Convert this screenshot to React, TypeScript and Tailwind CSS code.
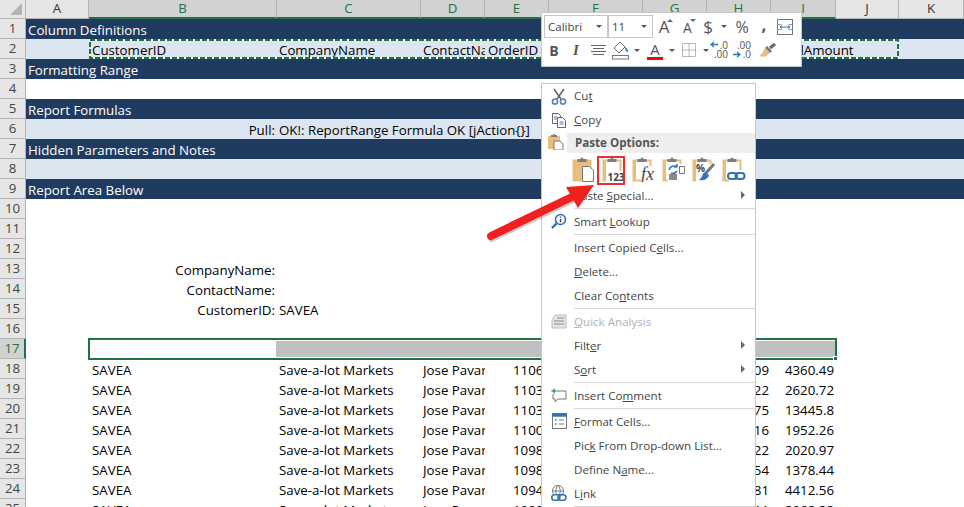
import React from 'react'

const colWidths = ['w-[63px]', 'w-[188px]', 'w-[144px]', 'w-[64px]', 'w-[64px]', 'w-[94px]', 'w-[64px]', 'w-[64px]', 'w-[65px]', 'w-[63px]', 'w-[65px]']
const colNames = ['A', 'B', 'C', 'D', 'E', 'F', 'G', 'H', 'I', 'J', 'K']

type Cell = { text: string; right?: boolean; clip?: boolean; tone?: string }
type RowData = { n: number; tone?: string; cells?: Record<number, Cell> }

const dark = 'bg-[#203b60] text-white'
const light = 'bg-[#dce6f1] text-black'

const records = [
  ['11064', '09', '4360.49'],
  ['11031', '22', '2620.72'],
  ['11030', '75', '13445.8'],
  ['11008', '16', '1952.26'],
  ['10984', '22', '2020.97'],
  ['10983', '54', '1378.44'],
  ['10941', '81', '4412.56'],
  ['10904', '11', '2062.22'],
]

const rows: RowData[] = [
  { n: 1, tone: dark, cells: { 0: { text: 'Column Definitions' } } },
  {
    n: 2,
    tone: light,
    cells: {
      1: { text: 'CustomerID' },
      2: { text: 'CompanyName' },
      3: { text: 'ContactName', clip: true },
      4: { text: 'OrderID' },
      8: { text: 'TotalAmount' },
    },
  },
  { n: 3, tone: dark, cells: { 0: { text: 'Formatting Range' } } },
  { n: 4 },
  { n: 5, tone: dark, cells: { 0: { text: 'Report Formulas' } } },
  {
    n: 6,
    tone: light,
    cells: { 1: { text: 'Pull:', right: true }, 2: { text: 'OK!: ReportRange Formula OK [jAction{}]' } },
  },
  { n: 7, tone: dark, cells: { 0: { text: 'Hidden Parameters and Notes' } } },
  { n: 8, tone: light },
  { n: 9, tone: dark, cells: { 0: { text: 'Report Area Below' } } },
  { n: 10 },
  { n: 11 },
  { n: 12 },
  { n: 13, cells: { 1: { text: 'CompanyName:', right: true } } },
  { n: 14, cells: { 1: { text: 'ContactName:', right: true } } },
  { n: 15, cells: { 1: { text: 'CustomerID:', right: true }, 2: { text: 'SAVEA' } } },
  { n: 16 },
  { n: 17 },
  ...records.map((r, i) => ({
    n: 18 + i,
    cells: {
      1: { text: 'SAVEA' },
      2: { text: 'Save-a-lot Markets' },
      3: { text: 'Jose Pavarotti', clip: true },
      4: { text: r[0], right: true },
      7: { text: r[1], right: true },
      8: { text: r[2], right: true },
    },
  })),
]

function Row({ row }: { row: RowData }) {
  const selected = row.n === 17
  return (
    <div className={`flex h-[20px] ${row.tone ?? 'bg-white text-black'}`}>
      <div
        className={`w-[26px] h-[20px] shrink-0 flex items-center justify-center pt-px text-[13.3px] border-b border-[#b4b4b4] ${
          selected
            ? 'bg-[#d2d2d2] text-[#217346] border-r-2 border-r-[#217346]'
            : 'bg-[#e6e6e6] text-[#444] border-r border-r-[#b4b4b4]'
        }`}
      >
        {row.n}
      </div>
      {colWidths.map((w, i) => {
        const cell = row.cells?.[i]
        const side = cell?.right
          ? i === 4
            ? '-right-[2px]'
            : 'right-[2px]'
          : i === 1 || i === 4
            ? 'left-[3px]'
            : 'left-[2px]'
        return (
          <div key={i} className={`${w} h-[20px] shrink-0 relative`}>
            {cell && (
              <span
                className={`absolute top-px leading-[21px] whitespace-nowrap text-[13.3px] ${side} ${
                  cell.clip ? 'w-[62px] overflow-hidden' : ''
                }`}
              >
                {cell.text}
              </span>
            )}
          </div>
        )
      })}
    </div>
  )
}

function ColumnHeader() {
  return (
    <div className="flex h-[19px]">
      <div className="w-[26px] h-[19px] shrink-0 bg-[#e6e6e6] border-r border-b border-[#b4b4b4] flex items-end justify-end pr-[3px] pb-[3px]">
        <div className="w-[12px] h-[12px] bg-[#b4b4b4] [clip-path:polygon(100%_0,100%_100%,0_100%)]" />
      </div>
      {colWidths.map((w, i) => {
        const on = i >= 1 && i <= 8
        return (
          <div
            key={i}
            className={`${w} h-[19px] shrink-0 flex items-center justify-center text-[13.3px] border-r border-[#b4b4b4] ${
              on
                ? 'bg-[#d2d2d2] text-[#217346] border-b-2 border-b-[#217346]'
                : 'bg-[#e6e6e6] text-[#333] border-b border-b-[#b4b4b4]'
            }`}
          >
            {colNames[i]}
          </div>
        )
      })}
    </div>
  )
}

const tan = '#e8bd80'
const clip = '#7d7d7d'

function Board({ solid, children }: { solid?: boolean; children?: React.ReactNode }) {
  return (
    <svg width="24" height="26" viewBox="0 0 24 26">
      <path d="M1.5 4.5h17v20h-17z" fill={solid ? tan : '#fff'} stroke={tan} strokeWidth="2" />
      {!solid && <path d="M1 4h3v21H1z" fill={tan} />}
      <path d="M5.5 6V3h3a1.5 1.5 0 0 1 3 0h3v3z" fill={clip} />
      {children}
    </svg>
  )
}

function PasteIcons() {
  return (
    <div className="flex h-[30px] gap-[6px] pl-[30px] pt-[3px]">
      <Board solid>
        <path d="M10.5 10.5h7l4 4v11h-11z" fill="#fff" stroke="#777" />
      </Board>
      <Board>
        <rect x="4" y="15" width="20" height="11" fill="#fff" />
        <text x="14" y="24.5" textAnchor="middle" fontSize="10" fontWeight="700" fill="#444">123</text>
      </Board>
      <Board>
        <rect x="9" y="10" width="15" height="16" fill="#fff" />
        <text x="15.5" y="24" textAnchor="middle" fontSize="18" fontStyle="italic" fontFamily="'Liberation Serif', serif" fill="#444">fx</text>
      </Board>
      <Board>
        <rect x="6" y="8" width="18" height="18" fill="#fff" />
        <path d="M17.5 10.5h5v7h-5z" fill="#fff" stroke="#777" />
        <path d="M7 18h8v6H7z" fill="#8a8a8a" />
        <path d="M7 14a5 5 0 0 1 8-3m0 0V8m0 3h-3M15 15a5 5 0 0 1-6 2" fill="none" stroke="#2f75b5" strokeWidth="1.5" />
      </Board>
      <Board>
        <rect x="4" y="8" width="16" height="18" fill="#fff" />
        <text x="4" y="16" fontSize="10" fontWeight="700" fill="#444">%</text>
        <path d="M22 8 14 17" stroke="#777" strokeWidth="3" />
        <path d="M13 16c-3 1-2 5-6 8 5 1 9-1 10-5z" fill="#2f75b5" />
      </Board>
      <Board>
        <rect x="7" y="14" width="17" height="12" fill="#fff" />
        <rect x="6" y="17" width="9" height="6" rx="3" fill="none" stroke="#2f75b5" strokeWidth="2" />
        <rect x="13.5" y="17" width="9" height="6" rx="3" fill="none" stroke="#2f75b5" strokeWidth="2" />
      </Board>
    </div>
  )
}

const Scissors = (
  <svg width="16" height="17" viewBox="0 0 16 17" fill="none">
    <path d="M3 1l7 10M13 1 6 11" stroke="#666" strokeWidth="1.6" />
    <circle cx="4" cy="13.5" r="2.6" stroke="#4f7cb5" strokeWidth="1.5" />
    <circle cx="12" cy="13.5" r="2.6" stroke="#4f7cb5" strokeWidth="1.5" />
  </svg>
)

const CopyIcon = (
  <svg width="16" height="15" viewBox="0 0 16 15" fill="none" stroke="#666">
    <path d="M1.5.5h6l2 2v8h-8z" fill="#fff" />
    <path d="M6.5 4.5h5l3 3v7h-8z" fill="#fff" />
    <path d="M3 4h3M3 6h3M8.5 9h4M8.5 11h4" stroke="#4f7cb5" />
  </svg>
)

const LookupIcon = (
  <svg width="16" height="16" viewBox="0 0 16 16" fill="none">
    <circle cx="9.5" cy="6.5" r="5" stroke="#2f6db5" strokeWidth="1.6" />
    <path d="M5.5 10.5 1 15" stroke="#2f6db5" strokeWidth="2.4" />
    <path d="M9.5 3.6v1.2M9.5 6v3.2" stroke="#444" strokeWidth="1.5" />
  </svg>
)

const QuickIcon = (
  <svg width="16" height="15" viewBox="0 0 16 15" fill="none">
    <path d="M4 1h11v13H1V6z" fill="#e4e4e4" stroke="#bdbdbd" />
    <path d="M6 4h7M3 7h10M3 10h10" stroke="#a8a8a8" strokeWidth="1.5" />
  </svg>
)

const CommentIcon = (
  <svg width="16" height="15" viewBox="0 0 16 15" fill="none">
    <path d="M6 3h9v8H7l-3 3v-3H2V6" stroke="#777" />
    <path d="M3 .5v5M.5 3h5" stroke="#3f9b6a" strokeWidth="1.5" />
  </svg>
)

const FormatIcon = (
  <svg width="15" height="16" viewBox="0 0 15 16" fill="none">
    <rect x=".5" y="3" width="14" height="12.5" fill="#fff" stroke="#777" />
    <rect x="0" y="0" width="15" height="3.5" fill="#2f75b5" />
    <path d="M3 7h1.5M3 11h1.5" stroke="#666" strokeWidth="1.5" />
    <path d="M7 7h5M7 11h5" stroke="#777" />
  </svg>
)

const LinkIcon = (
  <svg width="16" height="16" viewBox="0 0 16 16" fill="none">
    <circle cx="7" cy="6" r="5.5" stroke="#777" />
    <path d="M1.5 6h11M7 .5c-3 3-3 8 0 11M7 .5c3 3 3 8 0 11" stroke="#777" />
    <rect x=".8" y="9.8" width="8" height="5.4" rx="2.7" fill="#fff" stroke="#2f75b5" strokeWidth="1.6" />
    <rect x="7" y="9.8" width="8" height="5.4" rx="2.7" fill="none" stroke="#2f75b5" strokeWidth="1.6" />
  </svg>
)

const PasteSmall = (
  <svg width="16" height="16" viewBox="0 0 16 16">
    <rect x="0" y="2" width="12" height="13" fill={tan} />
    <path d="M3 3V1h2a1 1 0 0 1 2 0h2v2z" fill={clip} />
    <path d="M6 7h6l3 3v6H6z" fill="#fff" stroke="#777" />
  </svg>
)

function Item({
  icon,
  arrow,
  disabled,
  tight,
  before,
  key_,
  after,
}: {
  icon?: React.ReactNode
  arrow?: boolean
  disabled?: boolean
  tight?: boolean
  before: string
  key_: string
  after: string
}) {
  return (
    <div className={`flex h-[24px] items-center ${disabled ? 'text-[#b1b1b1]' : 'text-[#444]'}`}>
      <div className="w-[32px] flex justify-center pl-[2px] shrink-0">{icon}</div>
      <span className={`whitespace-pre ${tight ? '' : 'mt-[2px]'}`}>
        {before}
        <span className="underline">{key_}</span>
        {after}
      </span>
      {arrow && <div className="ml-auto mr-[10px] w-0 h-0 border-y-[4px] border-y-transparent border-l-[4px] border-l-[#666]" />}
    </div>
  )
}

const Sep = () => <div className="h-[2px] ml-[32px] flex items-center"><div className="h-px w-full bg-[#d8d8d8]" /></div>

function ContextMenu() {
  return (
    <div className="absolute left-[541px] top-[83px] w-[215px] h-[430px] bg-white border border-[#c6c6c6] text-[11.6px]">
      <Item icon={Scissors} tight before="Cu" key_="t" after="" />
      <Item icon={CopyIcon} tight before="" key_="C" after="opy" />
      <div className="flex h-[21px] pt-px">
        <div className="w-[24px] flex justify-center pl-[4px] pt-[1px] shrink-0">{PasteSmall}</div>
        <div className="w-[188px] ml-px bg-[#eeeeee] flex items-center pl-[8px] font-bold text-[#555]">Paste Options:</div>
      </div>
      <PasteIcons />
      <Item before="Paste " key_="S" after="pecial..." arrow />
      <Sep />
      <Item icon={LookupIcon} before="Smart " key_="L" after="ookup" />
      <Sep />
      <Item before="Insert Copied C" key_="e" after="lls..." />
      <Item before="" key_="D" after="elete..." />
      <Item before="Clear Co" key_="n" after="tents" />
      <Sep />
      <Item icon={QuickIcon} disabled before="" key_="Q" after="uick Analysis" />
      <Item before="Filt" key_="e" after="r" arrow />
      <Item before="S" key_="o" after="rt" arrow />
      <Sep />
      <Item icon={CommentIcon} before="Insert Co" key_="m" after="ment" />
      <Sep />
      <Item icon={FormatIcon} before="" key_="F" after="ormat Cells..." />
      <Item before="Pic" key_="k" after=" From Drop-down List..." />
      <Item before="Define N" key_="a" after="me..." />
      <Item icon={LinkIcon} before="L" key_="i" after="nk" />
      <Sep />
    </div>
  )
}

const Caret = () => <div className="w-0 h-0 border-x-[3px] border-x-transparent border-t-[3px] border-t-[#555]" />

function Slot({ w, children }: { w: string; children?: React.ReactNode }) {
  return <div className={`${w} h-full shrink-0 flex items-center justify-center text-[#555]`}>{children}</div>
}

function MiniToolbar() {
  return (
    <div className="absolute left-[541px] top-[12px] w-[261px] h-[55px] bg-white border border-[#c6c6c6] pl-[2px] pt-[2px] text-[#444]">
      <div className="flex h-[23px]">
        <div className="w-[64px] h-[23px] border border-[#c6c6c6] flex items-center justify-between pl-[3px] pr-[5px] text-[11.5px]">
          Calibri <Caret />
        </div>
        <div className="w-[45px] h-[23px] border border-[#c6c6c6] flex items-center justify-between pl-[3px] pr-[5px] text-[11.5px]">
          11 <Caret />
        </div>
        <Slot w="w-[22px]">
          <span className="relative text-[17px] leading-none">A<span className="absolute -right-[4px] top-[1px] w-0 h-0 border-x-[3px] border-x-transparent border-b-[3px] border-b-[#2f75b5]" /></span>
        </Slot>
        <Slot w="w-[25px]">
          <span className="relative text-[14px] leading-none mt-[2px]">A<span className="absolute -right-[4px] -top-[2px] w-0 h-0 border-x-[3px] border-x-transparent border-t-[3px] border-t-[#2f75b5]" /></span>
        </Slot>
        <Slot w="w-[16px]"><span className="text-[17px]">$</span></Slot>
        <Slot w="w-[16px]"><Caret /></Slot>
        <Slot w="w-[20px]"><span className="text-[16px]">%</span></Slot>
        <Slot w="w-[24px]"><span className="text-[17px] font-bold leading-none -mt-[5px]">,</span></Slot>
        <Slot w="w-[18px]">
          <svg width="16" height="16" viewBox="0 0 16 16" fill="none">
            <rect x=".5" y=".5" width="15" height="15" stroke="#777" />
            <path d="M.5 5.5h4M11.5 5.5h4M.5 10.5h4M11.5 10.5h4" stroke="#999" />
            <path d="M3 8h10M3 8l2-1.5M3 8l2 1.5M13 8l-2-1.5M13 8l-2 1.5" stroke="#2f75b5" />
          </svg>
        </Slot>
      </div>
      <div className="flex h-[24px] pl-px">
        <Slot w="w-[18px]"><span className="font-bold text-[14px]">B</span></Slot>
        <Slot w="w-[26px]"><span className="italic font-semibold text-[15px] font-['Liberation_Serif']">I</span></Slot>
        <Slot w="w-[18px]">
          <svg width="15" height="11" viewBox="0 0 15 11" stroke="#666"><path d="M0 .5h15M2 3.5h11M0 6.5h15M2 9.5h11" /></svg>
        </Slot>
        <Slot w="w-[26px]">
          <svg width="17" height="19" viewBox="0 0 17 19" fill="none">
            <path d="M8 1 2 7l5 5 6-6z" stroke="#666" fill="#fff" />
            <path d="M13 6c2 1 3 3 3 5-2 0-3-2-3-5z" fill="#2f75b5" />
            <rect x=".5" y="14.5" width="16" height="3.5" stroke="#777" />
          </svg>
        </Slot>
        <Slot w="w-[8px]"><Caret /></Slot>
        <Slot w="w-[28px]">
          <span className="relative block h-[20px] w-[17px] text-center text-[15px] leading-[18px]">
            A
            <span className="absolute left-0 bottom-0 w-[16px] h-[3px] bg-[#ff0000]" />
          </span>
        </Slot>
        <Slot w="w-[6px]"><Caret /></Slot>
        <Slot w="w-[28px]">
          <svg width="14" height="14" viewBox="0 0 14 14" fill="none" stroke="#777" strokeDasharray="1 1">
            <path d="M.5.5h13v13H.5zM7 .5v13M.5 7h13" />
          </svg>
        </Slot>
        <Slot w="w-[6px]"><Caret /></Slot>
        <Slot w="w-[20px]">
          <span className="relative w-[18px] h-[18px] text-[10px] leading-[9px] text-right block text-[#555]">
            .0<br />.00
            <svg className="absolute left-0 top-0" width="8" height="7" viewBox="0 0 8 7" fill="none" stroke="#2f75b5" strokeWidth="1.3">
              <path d="M8 3.5H1M4 1 1 3.5 4 6" />
            </svg>
          </span>
        </Slot>
        <Slot w="w-[26px]">
          <span className="relative w-[18px] h-[18px] text-[10px] leading-[9px] text-right block text-[#555]">
            .00<br />.0
            <svg className="absolute left-0 top-[10px]" width="8" height="7" viewBox="0 0 8 7" fill="none" stroke="#2f75b5" strokeWidth="1.3">
              <path d="M0 3.5h7M4 1l3 2.5L4 6" />
            </svg>
          </span>
        </Slot>
        <Slot w="w-[24px]">
          <svg width="17" height="15" viewBox="0 0 17 15">
            <path d="M11 5l5-4" stroke="#666" strokeWidth="3" />
            <path d="M8 3l5 5-2 2-5-5z" fill="#777" />
            <path d="M6 5l5 5c-3 2-4 3-6 4l-5-1c3-1 4-5 6-8z" fill="#e8bd80" />
          </svg>
        </Slot>
      </div>
    </div>
  )
}

export default function App() {
  return (
    <div className="relative w-[964px] h-[507px] overflow-hidden bg-white font-['Open_Sans',sans-serif]">
      <ColumnHeader />
      {rows.map((row) => (
        <Row key={row.n} row={row} />
      ))}

      {/* marching ants on row 2 */}
      <svg className="absolute left-[88px] top-[38px]" width="812" height="22" viewBox="0 0 812 22" fill="none">
        <rect x="2" y="2" width="808" height="18" stroke="#fff" strokeWidth="2" />
        <rect x="2" y="2" width="808" height="18" stroke="#1f7246" strokeWidth="2" strokeDasharray="5 2" />
      </svg>

      {/* selection on row 17 */}
      <div className="absolute left-[88px] top-[338px] w-[749px] h-[22px] border-2 border-[#217346] pl-[186px] py-px">
        <div className="w-full h-full bg-[#c0c0c0]" />
        <div className="absolute -right-[3px] -bottom-[3px] w-[5px] h-[5px] bg-[#217346] border border-white" />
      </div>

      <MiniToolbar />
      <ContextMenu />

      {/* red box and arrow */}
      <div className="absolute left-[597px] top-[156px] w-[28px] h-[29px] border-2 border-[#e8302f]" />
      <svg className="absolute left-[480px] top-[180px]" width="120" height="66" viewBox="0 0 120 66">
        <path d="M11 57 94 17" stroke="#000" strokeOpacity=".2" strokeWidth="8" strokeLinecap="round" transform="translate(1 1)" />
        <path d="M11 56 94 16" stroke="#f0201f" strokeWidth="8" strokeLinecap="round" />
        <path d="M114 5 86 7l12 21z" fill="#f0201f" />
      </svg>
    </div>
  )
}
